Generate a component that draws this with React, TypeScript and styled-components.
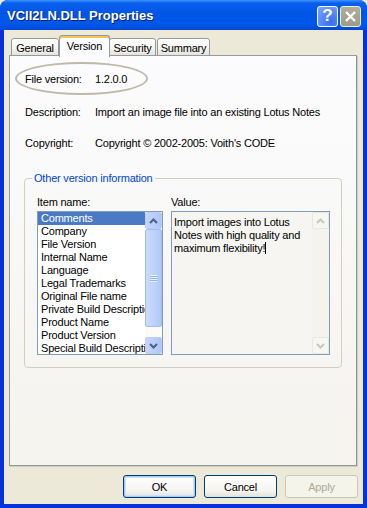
import React from "react";
import styled, { createGlobalStyle } from "styled-components";

const GlobalStyle = createGlobalStyle`
	html, body {
		margin: 0;
		padding: 0;
		width: 367px;
		height: 508px;
		overflow: hidden;
		background: #ECE9D8;
	}
	* { box-sizing: border-box; }
`;

const itemNames = [
	"Comments",
	"Company",
	"File Version",
	"Internal Name",
	"Language",
	"Legal Trademarks",
	"Original File name",
	"Private Build Description",
	"Product Name",
	"Product Version",
	"Special Build Description",
];

const tabs = [
	{ name: "General", width: 48 },
	{ name: "Version", width: 51 },
	{ name: "Security", width: 47 },
	{ name: "Summary", width: 53 },
];

const Chevron = ({ up, color }: { up?: boolean; color: string }) => (
	<svg width="9" height="6" viewBox="0 0 9 6">
		<path
			d={up ? "M1 5 L4.5 1.5 L8 5" : "M1 1 L4.5 4.5 L8 1"}
			fill="none"
			stroke={color}
			strokeWidth="2"
		/>
	</svg>
);

export default function App() {
	return (
		<>
			<GlobalStyle />
			<Window>
				<TitleBar>
					<Title>VCII2LN.DLL Properties</Title>
					<CaptionButtons>
						<HelpButton>?</HelpButton>
						<CloseButton>
							<svg width="13" height="13" viewBox="0 0 13 13">
								<path d="M2 2 L11 11 M11 2 L2 11" stroke="#fff" strokeWidth="2.4" />
							</svg>
						</CloseButton>
					</CaptionButtons>
				</TitleBar>
				<Body>
					<TabRow>
						{tabs.map((t) => (
							<Tab key={t.name} $active={t.name === "Version"} $width={t.width}>{t.name}</Tab>
						))}
					</TabRow>
					<Panel>
						<VersionOval>
							<Label>File version:</Label>
							<span>1.2.0.0</span>
						</VersionOval>
						<InfoRow $top={10}>
							<Label>Description:</Label>
							<span>Import an image file into an existing Lotus Notes</span>
						</InfoRow>
						<InfoRow $top={18}>
							<Label>Copyright:</Label>
							<span>Copyright © 2002-2005: Voith's CODE</span>
						</InfoRow>
						<GroupBox>
							<Legend>Other version information</Legend>
							<GroupGrid>
								<FieldLabel>Item name:</FieldLabel>
								<FieldLabel>Value:</FieldLabel>
								<ListBox>
									<ListItems>
										{itemNames.map((n, i) => (
											<ListItem key={n} $selected={i === 0}>{n}</ListItem>
										))}
									</ListItems>
									<ScrollBar>
										<ScrollButton><Chevron up color="#4D6185" /></ScrollButton>
										<Thumb>
											<Grip />
										</Thumb>
										<Track />
										<ScrollButton><Chevron color="#4D6185" /></ScrollButton>
									</ScrollBar>
								</ListBox>
								<ValueBox>
									<ValueText>
										Import images into Lotus Notes with high quality and maximum flexibility!<Caret />
									</ValueText>
									<ScrollBar $disabled>
										<ScrollButton $disabled><Chevron up color="#C9C7BA" /></ScrollButton>
										<Track $disabled />
										<ScrollButton $disabled><Chevron color="#C9C7BA" /></ScrollButton>
									</ScrollBar>
								</ValueBox>
							</GroupGrid>
						</GroupBox>
					</Panel>
					<ButtonRow>
						<DialogButton $default>OK</DialogButton>
						<DialogButton>Cancel</DialogButton>
						<DialogButton disabled>Apply</DialogButton>
					</ButtonRow>
				</Body>
			</Window>
		</>
	);
}

const Window = styled.div`
	width: 367px;
	height: 508px;
	display: flex;
	flex-direction: column;
	background: #0831D9;
	border-radius: 8px 8px 0 0;
	font-family: Tahoma, "Liberation Sans", Arial, sans-serif;
	font-size: 11px;
	letter-spacing: -0.2px;
	color: #000;
	overflow: hidden;
`;

const TitleBar = styled.div`
	height: 30px;
	flex: none;
	display: flex;
	align-items: center;
	justify-content: space-between;
	padding: 0 6px 0 7px;
	background: linear-gradient(
		to bottom,
		#3D95FF 0%,
		#0A5FEE 10%,
		#0055E5 45%,
		#0058EA 80%,
		#0348D6 100%
	);
	border-radius: 8px 8px 0 0;
`;

const Title = styled.div`
	font-family: "Liberation Sans", Arial, sans-serif;
	font-weight: bold;
	font-size: 13px;
	letter-spacing: 0;
	color: #fff;
	text-shadow: 1px 1px 0 #0A1E6A;
	margin-top: 1px;
`;

const CaptionButtons = styled.div`
	display: flex;
	gap: 2px;
	margin-top: 2px;
`;

const CaptionBase = styled.div`
	width: 21px;
	height: 21px;
	border: 1px solid #fff;
	border-radius: 3px;
	display: flex;
	align-items: center;
	justify-content: center;
	color: #fff;
`;

const HelpButton = styled(CaptionBase)`
	background: radial-gradient(circle at 70% 80%, #3B6FEA 0%, #5A8CF8 55%, #7FA6FF 100%);
	font-family: "Liberation Sans", Arial, sans-serif;
	font-weight: bold;
	font-size: 17px;
	letter-spacing: 0;
`;

const CloseButton = styled(CaptionBase)`
	background: linear-gradient(to bottom, #B0AE9A 0%, #9E9B86 100%);
	border-color: #F0EFE8;
`;

const Body = styled.div`
	flex: 1;
	margin: 0 4px 4px 4px;
	background: #ECE9D8;
	display: flex;
	flex-direction: column;
	padding: 5px 6px 5px 5px;
`;

const TabRow = styled.div`
	display: flex;
	align-items: flex-end;
	height: 21px;
	padding-left: 2px;
	position: relative;
	z-index: 1;
	margin-bottom: -1px;
`;

const Tab = styled.div<{ $active?: boolean; $width: number }>`
	width: ${(p) => p.$width}px;
	height: ${(p) => (p.$active ? "22px" : "18px")};
	margin-bottom: ${(p) => (p.$active ? "-1px" : "0")};
	margin-right: ${(p) => (p.$active ? "-1px" : "1px")};
	margin-left: ${(p) => (p.$active ? "-1px" : "0")};
	display: flex;
	align-items: center;
	justify-content: center;
	padding-top: ${(p) => (p.$active ? "0" : "1px")};
	padding-bottom: ${(p) => (p.$active ? "2px" : "0")};
	border: 1px solid #919B9C;
	border-bottom: ${(p) => (p.$active ? "none" : "1px solid #919B9C")};
	border-radius: 3px 3px 0 0;
	background: ${(p) =>
		p.$active ? "#FCFCFE" : "linear-gradient(to bottom, #FFFFFF 0%, #F3F3EF 60%, #E5E4DC 100%)"};
	box-shadow: ${(p) => (p.$active ? "inset 0 2px 0 #F5C45A" : "none")};
	position: relative;
	z-index: ${(p) => (p.$active ? 2 : 1)};
`;

const Panel = styled.div`
	height: 411px;
	border: 1px solid #919B9C;
	border-right-color: #8C9192;
	box-shadow: 1px 1px 0 #D0CEBF;
	background: linear-gradient(to bottom, #FCFCFE 0%, #F4F3EE 100%);
	display: flex;
	flex-direction: column;
	padding: 6px 0 0 5px;
`;

const Label = styled.span`
	width: 70px;
	flex: none;
`;

const VersionOval = styled.div`
	width: 133px;
	height: 33px;
	border: 2px solid #BDBAA9;
	border-radius: 50%;
	display: flex;
	align-items: center;
	padding-left: 8px;
`;

const InfoRow = styled.div<{ $top: number }>`
	display: flex;
	align-items: center;
	height: 13px;
	margin-top: ${(p) => p.$top}px;
	padding-left: 10px;
	white-space: nowrap;
`;

const GroupBox = styled.fieldset`
	margin: 23px 14px 0 9px;
	padding: 0 10px 12px 12px;
	border: 1px solid #D0D0BF;
	border-radius: 4px;
	min-width: 0;
`;

const Legend = styled.legend`
	color: #0046D5;
	line-height: 13px;
	padding: 0 2px;
	margin-left: -5px;
`;

const GroupGrid = styled.div`
	display: grid;
	grid-template-columns: 126px 159px;
	column-gap: 8px;
	row-gap: 2px;
	padding-top: 11px;
`;

const FieldLabel = styled.div`
	line-height: 13px;
`;

const ListBox = styled.div`
	height: 144px;
	border: 1px solid #7F9DB9;
	background: #fff;
	display: flex;
	overflow: hidden;
`;

const ListItems = styled.div`
	flex: 1;
	min-width: 0;
	overflow: hidden;
`;

const ListItem = styled.div<{ $selected?: boolean }>`
	height: 13px;
	line-height: 13px;
	padding-left: 3px;
	white-space: nowrap;
	overflow: hidden;
	background: ${(p) => (p.$selected ? "#4A7AC4" : "transparent")};
	color: ${(p) => (p.$selected ? "#fff" : "#000")};
`;

const ScrollBar = styled.div<{ $disabled?: boolean }>`
	width: 17px;
	flex: none;
	display: flex;
	flex-direction: column;
	background: ${(p) => (p.$disabled ? "#F4F3EC" : "#FDFDFA")};
`;

const ScrollButton = styled.div<{ $disabled?: boolean }>`
	height: 17px;
	flex: none;
	display: flex;
	align-items: center;
	justify-content: center;
	border: 1px solid ${(p) => (p.$disabled ? "#E8E8DF" : "#B9CCF6")};
	border-radius: 2px;
	background: ${(p) =>
		p.$disabled
			? "#F7F7F2"
			: "linear-gradient(to right, #C6D6FB 0%, #B8CDFA 60%, #AFC5F6 100%)"};
`;

const Thumb = styled.div`
	height: 98px;
	flex: none;
	border: 1px solid #A2BBEF;
	border-radius: 2px;
	background: linear-gradient(to right, #CBDBFC 0%, #BCD0FA 60%, #B2C8F8 100%);
	display: flex;
	align-items: center;
	justify-content: center;
`;

const Grip = styled.div`
	width: 7px;
	height: 7px;
	background: repeating-linear-gradient(
		to bottom,
		#EEF4FE 0px,
		#EEF4FE 1px,
		#8CB0F8 1px,
		#8CB0F8 2px
	);
`;

const Track = styled.div<{ $disabled?: boolean }>`
	flex: 1;
	background: ${(p) => (p.$disabled ? "#F4F3EC" : "#FBFBF7")};
`;

const ValueBox = styled.div`
	height: 144px;
	border: 1px solid #7F9DB9;
	background: #F6F5F1;
	display: flex;
`;

const ValueText = styled.div`
	flex: 1;
	padding: 4px 4px 0 2px;
	line-height: 13px;
`;

const Caret = styled.span`
	display: inline-block;
	width: 1px;
	height: 12px;
	background: #000;
	vertical-align: -2px;
`;

const ButtonRow = styled.div`
	display: flex;
	justify-content: flex-end;
	gap: 8px;
	margin-top: 9px;
	margin-right: -1px;
`;

const DialogButton = styled.button<{ $default?: boolean }>`
	width: 73px;
	height: 23px;
	font-family: inherit;
	font-size: 11px;
	letter-spacing: -0.2px;
	color: #000;
	border: 1px solid #003C74;
	border-radius: 3px;
	background: linear-gradient(to bottom, #FFFFFF 0%, #F5F4F0 70%, #E3E2DA 100%);
	box-shadow: ${(p) => (p.$default ? "inset 0 0 0 1px #ABC7F3, inset 0 0 0 2px #CEE0FA" : "none")};
	padding: 0;
	&:disabled {
		color: #ACA899;
		border-color: #C9C7BA;
		background: #F5F4EA;
	}
`;
